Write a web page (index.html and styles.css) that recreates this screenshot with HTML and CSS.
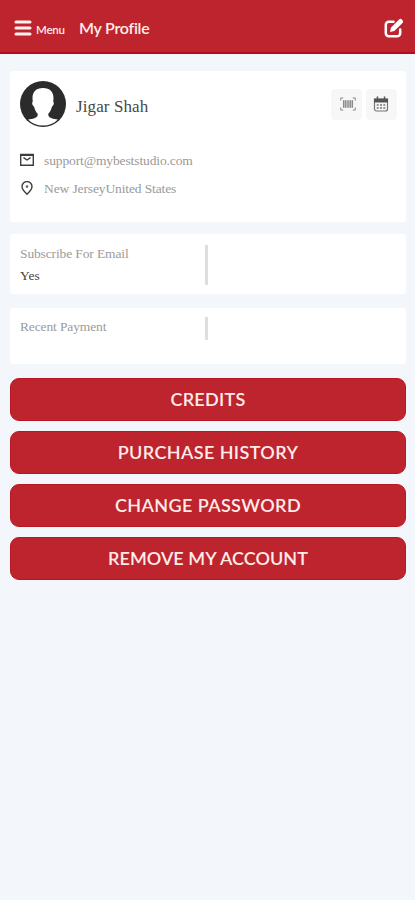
FILE: index.html
```html
<!DOCTYPE html>
<html lang="en">
<head>
<meta charset="utf-8">
<meta name="viewport" content="width=device-width, initial-scale=1">
<title>My Profile</title>
<link rel="stylesheet" href="styles.css">
</head>
<body>
<header class="topbar">
  <svg class="menu-icon" viewBox="0 0 18 16" aria-hidden="true"><path d="M2 2h14M2 8h14M2 14h14"/></svg>
  <span class="menu-label">Menu</span>
  <h1 class="title">My Profile</h1>
  <svg class="edit-icon" viewBox="0 0 20 20" aria-hidden="true">
    <path class="edit-box" d="M9.500 3.800H4.800a3 3 0 0 0-3 3v8.400a3 3 0 0 0 3 3h8.400a3 3 0 0 0 3-3V11.500"/>
    <path class="edit-pen" d="M6 14l.9-4.300 8.200-8.200a1.900 1.900 0 0 1 2.700 0l.7.700a1.900 1.900 0 0 1 0 2.700L10.300 13.100z"/>
  </svg>
</header>
<main class="content">
  <section class="card profile">
    <div class="identity">
      <svg class="avatar" viewBox="0 0 46 46" aria-hidden="true">
        <circle class="avatar-bg" cx="23" cy="23" r="23"/>
        <path class="avatar-person" d="M23 7c-7 0-10.500 4-10.500 10 0 1.500.2 2.500.3 3.500-1.300.8-.3 4.500 1.200 5 .8 3.500 2 5.500 3.700 7.300v1.400c-1 3.200-5 3.600-9.500 4.300C12 42.500 17 44.500 23 44.500s11-2 14.800-6c-4.500-.7-8.500-1.100-9.500-4.300v-1.400c1.700-1.800 2.900-3.800 3.700-7.300 1.500-.5 2.500-4.200 1.200-5 .1-1 .3-2 .3-3.500 0-6-3.500-10-10.500-10z"/>
      </svg>
      <h2 class="name">Jigar Shah</h2>
      <span class="tile">
        <svg class="tile-icon" viewBox="0 0 16 16" aria-hidden="true">
          <path class="scan-frame" d="M.7 4.500V2h2.500M12.800 2h2.500v2.500M15.300 11.500V14h-2.500M3.200 14H.7v-2.500"/>
          <path class="scan-bars" d="M3.500 4.300v7.400M5.500 4.300v7.400M8 4.300v7.400M10.300 4.300v7.400M12.500 4.300v7.400"/>
          <path class="scan-fill" d="M2.800 4.300h10.400v7.400H2.800z"/>
        </svg>
      </span>
      <span class="tile">
        <svg class="tile-icon" viewBox="0 0 16 16" aria-hidden="true">
          <path class="cal-box" d="M1.500 3.300h13v9.700a2 2 0 0 1-2 2h-9a2 2 0 0 1-2-2z"/>
          <path class="cal-head" d="M1 2.500h14v4H1zM3.700.4h1.500v3H3.700zM10.800.4h1.500v3h-1.500z"/>
          <path class="cal-days" d="M3.700 9h2M7 9h2M10.300 9h2M3.700 12h2M7 12h2M10.300 12h2"/>
        </svg>
      </span>
    </div>
    <div class="contact">
      <svg class="contact-icon" viewBox="0 0 14 14" aria-hidden="true"><path d="M.7 1.500h12.600v10.700H.7zM.7 2.200h12.600M3.500 4.700L7 7l3.500-2.300"/></svg>
      <span class="email">support@mybeststudio.com</span>
    </div>
    <div class="contact">
      <svg class="contact-icon" viewBox="0 0 14 14" aria-hidden="true"><path d="M7 13.200C4.500 11 2 8.500 2 5.600a5 5 0 0 1 10 0c0 2.900-2.500 5.400-5 7.600z"/><circle class="pin-dot" cx="7" cy="5.600" r="1.300"/></svg>
      <span class="place">New JerseyUnited States</span>
    </div>
  </section>
  <section class="card subscribe">
    <div class="field">
      <div class="label sub-label">Subscribe For Email</div>
      <div class="value">Yes</div>
    </div>
  </section>
  <section class="card payment">
    <div class="field">
      <div class="label pay-label">Recent Payment</div>
    </div>
  </section>
  <nav class="actions">
    <button class="action credits">CREDITS</button>
    <button class="action history">PURCHASE HISTORY</button>
    <button class="action password">CHANGE PASSWORD</button>
    <button class="action remove">REMOVE MY ACCOUNT</button>
  </nav>
</main>
</body>
</html>
```
FILE: styles.css
```css
* {
  box-sizing: border-box;
}

body {
  margin: 0;
  min-height: 900px;
  background: #f3f7fb;
  font-family: "Liberation Serif", serif;
}

svg {
  display: block;
  flex: none;
}

.topbar {
  display: flex;
  align-items: center;
  height: 54px;
  padding: 3px 11px 0 14px;
  background: #be242e;
  border-bottom: 2px solid #b50d1d;
  color: #ffece9;
  font-family: Lato, sans-serif;
}

.menu-icon {
  width: 18px;
  height: 16px;
  fill: none;
  stroke: #fff0ed;
  stroke-width: 3;
  stroke-linecap: round;
}

.menu-label {
  width: 44px;
  padding: 3px 0 0 4px;
  font-size: 11.500px;
  font-weight: 600;
  letter-spacing: -0.2px;
}

.title {
  margin: 0 auto 0 3px;
  font-size: 16px;
  line-height: 20px;
  font-weight: 600;
  letter-spacing: -0.250px;
}

.edit-icon {
  width: 20px;
  height: 20px;
}

.edit-box {
  fill: none;
  stroke: #fff;
  stroke-width: 2.500;
  stroke-linecap: round;
}

.edit-pen {
  fill: #fff;
}

.content {
  padding: 17px 9px 0 10px;
}

.card {
  background: #fff;
  border-radius: 3px;
}

.profile {
  height: 151px;
  padding: 10px;
}

.identity {
  display: flex;
  height: 46px;
  margin-bottom: 20px;
}

.avatar {
  width: 46px;
  height: 46px;
}

.avatar-bg {
  fill: #2b2b2b;
}

.avatar-person {
  fill: #fff;
}

.name {
  margin: 15px auto 0 10px;
  color: #484848;
  font-size: 17px;
  line-height: 22px;
  font-weight: 400;
  letter-spacing: 0.1px;
}

.tile {
  display: grid;
  place-items: center;
  width: 31px;
  height: 31px;
  margin: 8px -1px 0 5px;
  border-radius: 4px;
  background: #f7f7f7;
}

.tile-icon {
  width: 16px;
  height: 16px;
  margin: -2px 0 0 2px;
  fill: none;
}

.tile + .tile .tile-icon {
  margin-left: -2px;
}

.scan-frame {
  stroke: #888;
}

.scan-bars {
  stroke: #777;
}

.scan-fill {
  fill: #999;
  fill-opacity: 0.6;
}

.cal-box {
  stroke: #777;
  stroke-width: 1.200;
}

.cal-head {
  fill: #555;
}

.cal-days {
  stroke: #777;
  stroke-width: 1.500;
}

.contact {
  display: flex;
  align-items: center;
  height: 28px;
  color: #999;
  font-size: 13.500px;
  letter-spacing: -0.120px;
}

.contact-icon {
  width: 14px;
  height: 14px;
  margin: -2px 10px 0 0;
  fill: none;
  stroke: #3c3c3c;
  stroke-width: 1.400;
}

.pin-dot {
  fill: #666;
  stroke: none;
}

.subscribe {
  height: 60px;
  margin-top: 12px;
  padding: 11px 10px;
}

.payment {
  height: 56px;
  margin-top: 14px;
  padding: 9px 10px;
}

.field {
  width: 188px;
  height: 40px;
  border-right: 3px solid #dedede;
}

.payment .field {
  height: 23px;
}

.label {
  color: #9b9b9b;
  font-size: 13.500px;
  line-height: 17px;
  letter-spacing: -0.130px;
}

.payment .label {
  padding-top: 1px;
}

.value {
  margin-top: 5px;
  color: #444;
  font-size: 13.500px;
  line-height: 17px;
}

.actions {
  display: grid;
  gap: 10px;
  margin-top: 13.500px;
}

.action {
  height: 43px;
  padding: 0 0 1px;
  border: 1px solid #b91624;
  border-radius: 9px;
  background: #be242e;
  color: #ffece9;
  font: 600 18px Lato, sans-serif;
}

.credits {
  letter-spacing: 0.3px;
}

.history,
.password {
  letter-spacing: 0.4px;
}

.remove {
  letter-spacing: 0.050px;
}
```
